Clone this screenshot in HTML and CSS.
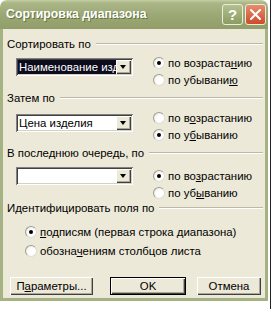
FILE: index.html
```html
<!DOCTYPE html>
<html lang="ru">
  <head>
    <meta charset="UTF-8" />
    <title>Сортировка диапазона</title>
    <link rel="stylesheet" href="styles.css">
  </head>
  <body>
    <div class="dialog">
      <div class="titlebar">
        <span class="title">Сортировка диапазона</span>
        <div class="title-buttons">
          <span class="tbtn help">?</span>
          <span class="tbtn close">
            <svg width="11" height="11" viewBox="0 0 11 11">
              <path d="M1 1 L10 10 M10 1 L1 10" stroke="#fff" stroke-width="2" stroke-linecap="square" />
            </svg>
          </span>
        </div>
      </div>

      <div class="body">
        <!-- первый ключ -->
        <section class="group g1">
          <div class="legend"><span>Сортировать по</span><i></i></div>
          <div class="sort-row">
            <div class="combo">
              <span class="combo-value selected">Наименование изделия</span>
              <span class="combo-btn"></span>
            </div>
            <div class="radios">
              <label class="radio checked"><i></i><span>по возраста<u>н</u>ию</span></label>
              <label class="radio"><i></i><span>по убывани<u>ю</u></span></label>
            </div>
          </div>
        </section>

        <section class="group g2">
          <div class="legend"><span>Затем по</span><i></i></div>
          <div class="sort-row">
            <div class="combo">
              <span class="combo-value">Цена изделия</span>
              <span class="combo-btn"></span>
            </div>
            <div class="radios">
              <label class="radio"><i></i><span>по в<u>о</u>зрастанию</span></label>
              <label class="radio checked"><i></i><span>по у<u>б</u>ыванию</span></label>
            </div>
          </div>
        </section>

        <section class="group g3">
          <div class="legend"><span>В последнюю очередь, по</span><i></i></div>
          <div class="sort-row">
            <div class="combo">
              <span class="combo-value"></span>
              <span class="combo-btn"></span>
            </div>
            <div class="radios">
              <label class="radio checked"><i></i><span>по во<u>з</u>растанию</span></label>
              <label class="radio"><i></i><span>по уб<u>ы</u>ванию</span></label>
            </div>
          </div>
        </section>

        <section class="group g4">
          <div class="legend"><span>Идентифицировать поля по</span><i></i></div>
          <div class="radios header-radios">
            <label class="radio checked"><i></i><span><u>п</u>одписям (первая строка диапазона)</span></label>
            <label class="radio"><i></i><span>обозна<u>ч</u>ениям столбцов листа</span></label>
          </div>
        </section>

        <div class="buttons">
          <button class="btn btn-params">П<u>а</u>раметры...</button>
          <button class="btn btn-ok">OK</button>
          <button class="btn btn-cancel">Отмена</button>
        </div>
      </div>
    </div>
  </body>
</html>
```

FILE: styles.css
```css
* {
  margin: 0;
  padding: 0;
  box-sizing: border-box;
}

body {
  width: 273px;
  height: 309px;
  overflow: hidden;
  background: #fff linear-gradient(90deg, transparent 270px, #222 270px, #222 271px, transparent 271px);
  font-family: "Liberation Sans", Arial, sans-serif;
  font-size: 11.4px;
  color: #000;
}

/* окно диалога */
.dialog {
  width: 268px;
  height: 301px;
  display: flex;
  flex-direction: column;
}

.titlebar {
  height: 29px;
  flex: none;
  display: flex;
  align-items: center;
  justify-content: space-between;
  padding: 0 2px 1px 6px;
  border-radius: 7px 7px 0 0;
  background: linear-gradient(#c4d0a4 0, #aab686 3px, #9ca875 50%, #919e69 100%);
}

.title {
  color: #fff;
  font-weight: bold;
  font-size: 12.3px;
  text-shadow: 1px 1px 0 #66743f;
}

.title-buttons {
  display: flex;
  gap: 2px;
}

.tbtn {
  width: 21px;
  height: 21px;
  display: flex;
  align-items: center;
  justify-content: center;
  border: 1px solid #e8eedb;
  border-radius: 3px;
  color: #fff;
  font-weight: bold;
  font-size: 15px;
}

.help {
  background: linear-gradient(#b3c08f, #8c9b62);
}

.close {
  background: linear-gradient(#e88c6e, #cc4b2c);
}

.body {
  flex: 1;
  background: #ece9d8;
  border: solid #a5b283;
  border-width: 0 3px 3px;
  padding: 8px 2px 0 4px;
}

/* заголовки групп */
.legend {
  height: 14px;
  display: flex;
  align-items: center;
}

.legend i {
  flex: 1;
  height: 2px;
  margin-left: 5px;
  border-top: 1px solid #bcb9a8;
  border-bottom: 1px solid #fff;
}

.sort-row {
  display: flex;
  padding-left: 9px;
}

.g2 .legend,
.g3 .legend {
  margin-top: 3px;
}

/* выпадающие списки */
.combo {
  width: 117px;
  height: 18px;
  display: flex;
  padding: 2px;
  background: #fff;
  box-shadow: inset 1px 1px #808080, inset -1px -1px #fff,
    inset 2px 2px #404040, inset -2px -2px #d4d0c8;
}

.g1 .combo {
  margin-top: 7px;
}

.g2 .combo {
  margin-top: 9px;
}

.g3 .combo {
  margin-top: 7px;
}

.combo-value {
  flex: 1;
  overflow: hidden;
  white-space: nowrap;
  line-height: 14px;
  padding-left: 1px;
}

.combo-value.selected {
  background: #0c0c1c;
  color: #fff;
}

.combo-btn {
  width: 15px;
  height: 14px;
  position: relative;
  background: #ece9d8;
  box-shadow: inset 1px 1px #fff, inset -1px -1px #404040, inset -2px -2px #aca899;
}

.combo-btn::after {
  content: "";
  position: absolute;
  left: 4px;
  top: 5px;
  border-left: 3.5px solid transparent;
  border-right: 3.5px solid transparent;
  border-top: 4px solid #000;
}

/* переключатели */
.radios {
  margin-left: 20px;
}

.g1 .radios {
  margin-top: 3px;
}

.g2 .radios {
  margin-top: 4px;
}

.g3 .radios {
  margin-top: 7px;
}

.radio {
  height: 17px;
  display: flex;
  align-items: center;
  white-space: nowrap;
}

.radio i {
  width: 12px;
  height: 12px;
  margin-right: 3px;
  border-radius: 50%;
  background: radial-gradient(circle at 65% 65%, #fff 40%, #e6e3d6 100%);
  border: 1px solid #a09e92;
  border-right-color: #e0ddd0;
  border-bottom-color: #e0ddd0;
  position: relative;
}

.radio.checked i::after {
  content: "";
  position: absolute;
  left: 3px;
  top: 3px;
  width: 4px;
  height: 4px;
  border-radius: 50%;
  background: #000;
}

.header-radios {
  margin: 7px 0 0 18px;
}

.header-radios .radio {
  height: 19px;
}

/* кнопки */
.buttons {
  display: flex;
  margin: 17px 0 0 3px;
}

.btn {
  height: 18px;
  font-family: inherit;
  font-size: 11.4px;
  background: #ece9d8;
  border: none;
  box-shadow: inset 1px 1px #fff, inset -1px -1px #404040, inset -2px -2px #aca899;
}

.btn-params {
  width: 83px;
}

.btn-ok {
  width: 76px;
  margin-left: 17px;
  border: 1px solid #000;
}

.btn-cancel {
  width: 64px;
  margin-left: 11px;
}
```
